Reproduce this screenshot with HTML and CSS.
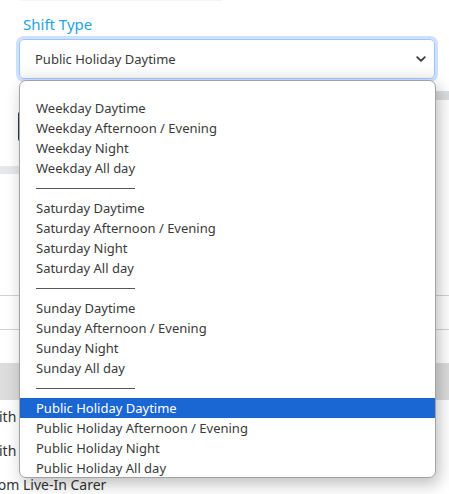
FILE: index.html
```html
<!DOCTYPE html>
<html lang="en">
<head>
	<meta charset="UTF-8">
	<title>Shift Type</title>
	<link rel="stylesheet" href="styles.css">
</head>
<body>
	<div class="page">
		<div class="topline"></div>
		<div class="field">
			<label class="field-label">Shift Type</label>
			<div class="select">
				<span>Public Holiday Daytime</span>
				<svg class="chevron" width="10" height="6" viewBox="0 0 10 6"><path d="M1.2 1.2l3.8 3.6 3.8-3.6" fill="none" stroke="#343a40" stroke-width="1.8" stroke-linecap="round" stroke-linejoin="round"/></svg>
			</div>
		</div>

		<div class="under">
			<div class="strip"></div>
			<div class="btn-dark"></div>
			<div class="band"></div>
			<div class="row row-tall"></div>
			<div class="row"></div>
			<div class="thead"></div>
			<div class="line">with</div>
			<div class="line">with</div>
			<div class="line line-wide">From Live-In Carer</div>
		</div>

		<div class="dropdown">
			<div class="opt">Weekday Daytime</div>
			<div class="opt">Weekday Afternoon / Evening</div>
			<div class="opt">Weekday Night</div>
			<div class="opt">Weekday All day</div>
			<div class="opt sep"><i></i></div>
			<div class="opt">Saturday Daytime</div>
			<div class="opt">Saturday Afternoon / Evening</div>
			<div class="opt">Saturday Night</div>
			<div class="opt">Saturday All day</div>
			<div class="opt sep"><i></i></div>
			<div class="opt">Sunday Daytime</div>
			<div class="opt">Sunday Afternoon / Evening</div>
			<div class="opt">Sunday Night</div>
			<div class="opt">Sunday All day</div>
			<div class="opt sep"><i></i></div>
			<div class="opt selected">Public Holiday Daytime</div>
			<div class="opt">Public Holiday Afternoon / Evening</div>
			<div class="opt">Public Holiday Night</div>
			<div class="opt">Public Holiday All day</div>
		</div>
	</div>
</body>
</html>
```

FILE: styles.css
```css
html,body{
	margin:0;
	padding:0;
	background:#fff;
}
body{
	font-family:"Noto Sans","Open Sans",sans-serif;
	color:#333;
	overflow:hidden;
}
.page{
	position:relative;
	width:449px;
	height:494px;
	overflow:hidden;
}
.topline{
	margin-left:21px;
	width:201px;
	height:1px;
	background:#f4f4f4;
}
.field{
	padding:13px 0 0 19px;
}
.field-label{
	display:block;
	margin-left:4px;
	font-size:15px;
	line-height:20px;
	color:#23a3dc;
}
.select{
	display:flex;
	align-items:center;
	justify-content:space-between;
	box-sizing:border-box;
	width:416px;
	height:40px;
	margin-top:5px;
	padding:0 8px 0 15px;
	border:1px solid #9ec5fe;
	border-radius:5px;
	box-shadow:0 0 0 3px #cde0fd;
	background:linear-gradient(#fff 65%,#f5f5f5);
	font-size:13px;
	color:#3a3a3a;
}
.chevron{
	display:block;
}
.under{
	font-size:14px;
}
.strip{
	margin:12px 0 0 auto;
	width:150px;
	height:9px;
	background:#dcdde0;
}
.btn-dark{
	margin:11px 0 0 18px;
	width:300px;
	height:31px;
	box-sizing:border-box;
	border:1px solid #2d3a48;
	border-radius:3px;
}
.band{
	margin-top:24px;
	width:420px;
	height:8px;
	background:#e6e7e9;
}
.row{
	height:33px;
	border-bottom:1px solid #d3d3d3;
}
.row-tall{
	height:121px;
}
.thead{
	margin-top:33px;
	height:37px;
	background:#dcdcdc;
}
.line{
	height:34px;
	line-height:34px;
	margin-left:-12px;
	color:#333;
}
.line-wide{
	margin-left:-15px;
}
.dropdown{
	position:absolute;
	left:19px;
	top:80px;
	box-sizing:border-box;
	width:417px;
	height:398px;
	padding-top:17px;
	background:#fff;
	border:1px solid #a3a3a3;
	border-radius:7px;
	box-shadow:3px 6px 16px rgba(0,0,0,.26);
	overflow:hidden;
}
.opt{
	height:20px;
	line-height:20px;
	padding-left:16px;
	font-size:13px;
	color:#3a3a3a;
	white-space:nowrap;
}
.opt.selected{
	background:#1a66d2;
	color:#fff;
}
.sep{
	display:flex;
	align-items:center;
}
.sep i{
	display:block;
	width:99px;
	height:1px;
	background:#555;
}
```
